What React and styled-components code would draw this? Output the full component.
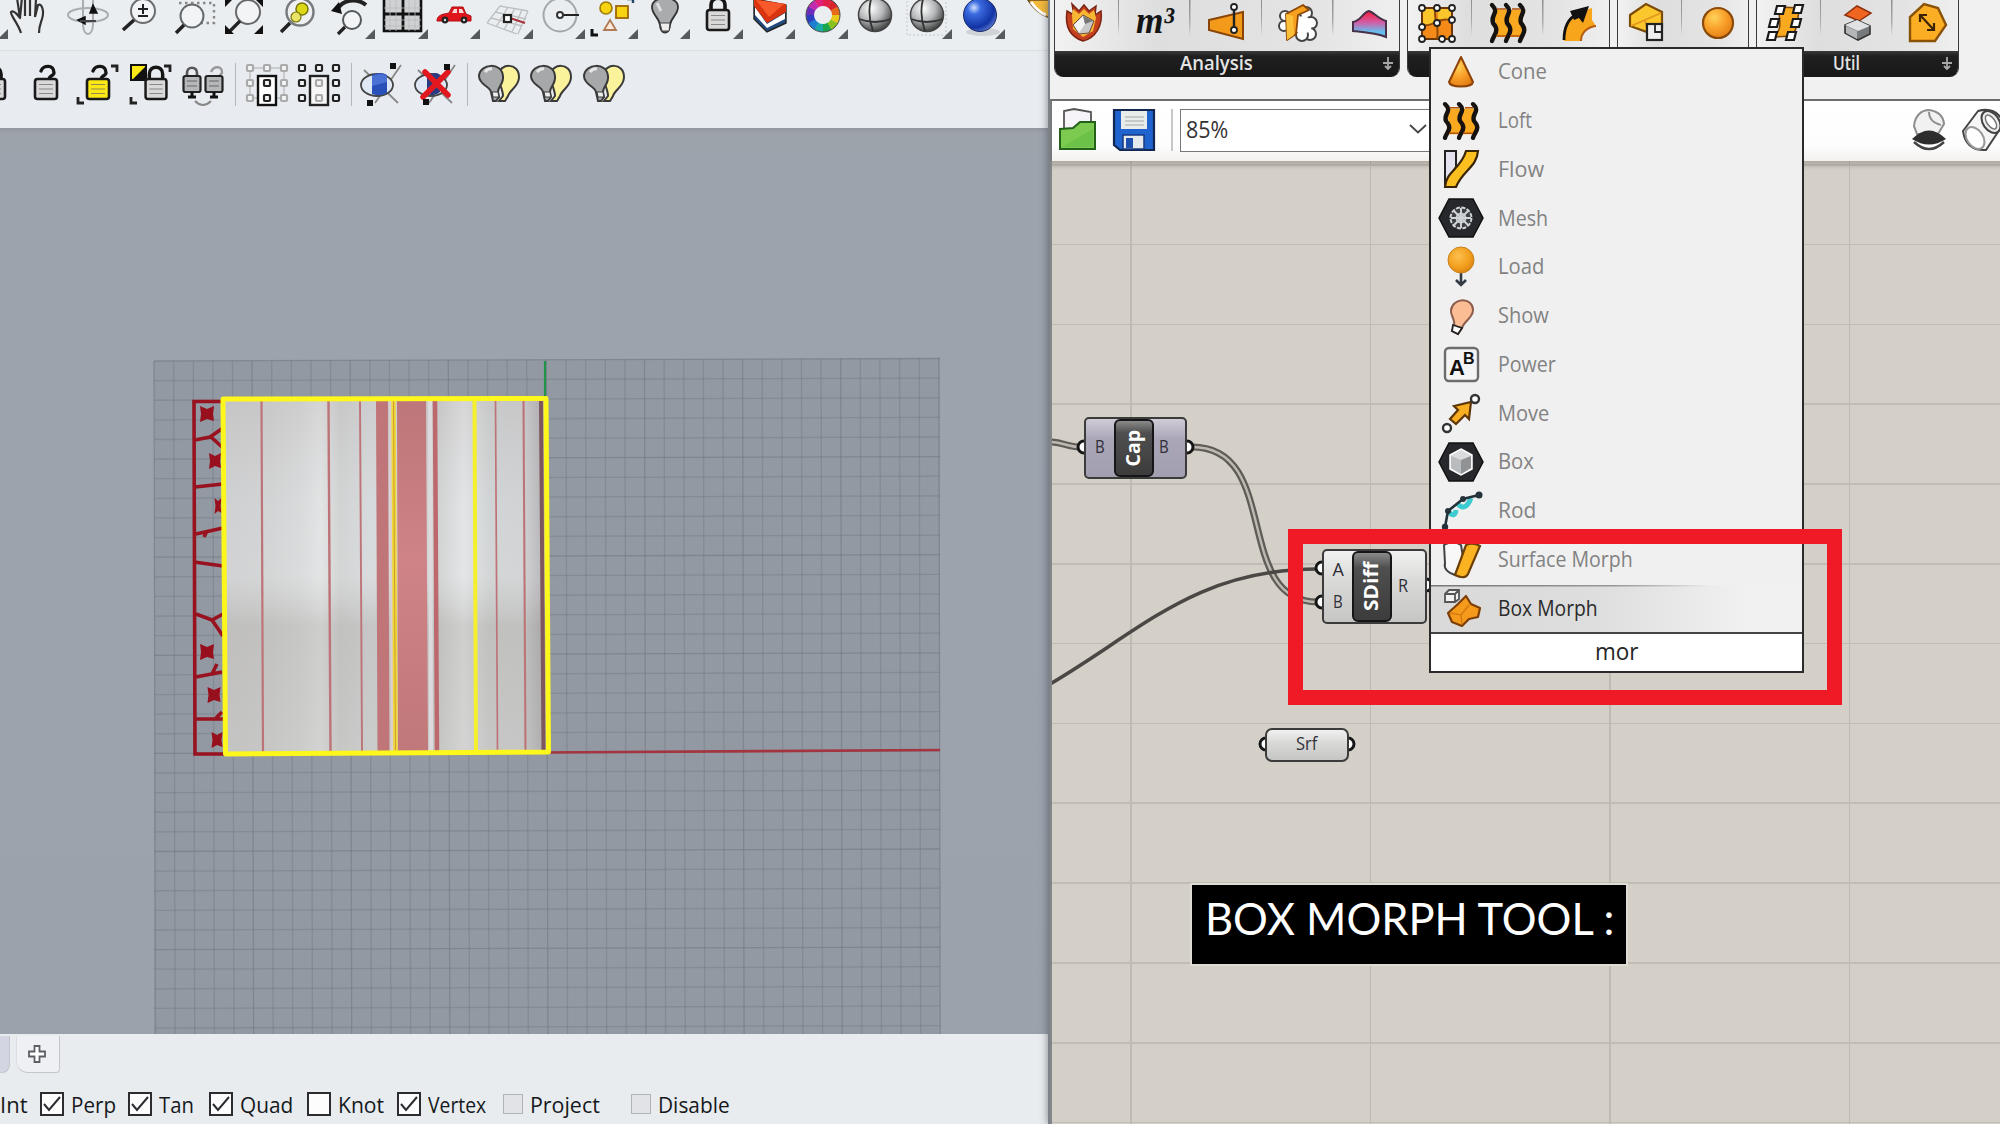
import React, { useLayoutEffect, useRef, useState } from "react";
import styled, { createGlobalStyle, css } from "styled-components";

const Global = createGlobalStyle`
  * { box-sizing: border-box; }
  body { margin: 0; overflow: hidden; background: #e8ebef; }
  svg { display: block; overflow: visible; flex: none; }
`;

const ui = `"Open Sans", "Noto Sans", sans-serif`;

/* ---------- condensed text ---------- */
const FitBox = styled.span`
  display: inline-block;
  width: ${(p) => p.$w}px;
  white-space: nowrap;
`;
const FitInner = styled.span`
  display: inline-block;
  transform-origin: 0 50%;
`;
function Fit({ w, children }) {
  const ref = useRef(null);
  const [k, setK] = useState(1);
  useLayoutEffect(() => {
    setK(w / ref.current.offsetWidth);
  }, [w]);
  return (
    <FitBox $w={w}>
      <FitInner ref={ref} style={{ transform: `scaleX(${k})` }}>{children}</FitInner>
    </FitBox>
  );
}

/* ---------- page shell ---------- */
const Page = styled.div`
  display: flex;
  width: 2000px;
  height: 1124px;
  overflow: hidden;
  position: relative;
  font-family: ${ui};
`;
const Rhino = styled.section`
  width: 1048px;
  flex: none;
  display: flex;
  flex-direction: column;
  background: #e8ecef;
  overflow: hidden;
`;
const Grasshopper = styled.section`
  flex: 1;
  min-width: 0;
  display: flex;
  flex-direction: column;
  border-left: 2px solid #7d8188;
  background: #f0f0f0;
  box-shadow: -1px 0 7px rgba(60, 66, 76, 0.5);
  overflow: hidden;
  position: relative;
`;

/* ---------- Rhino toolbars ---------- */
const ToolRow = styled.div`
  display: flex;
  height: ${(p) => p.$h}px;
  flex: none;
  ${(p) => p.$line && css`border-bottom: 1px solid #dbdfe3;`}
  background: ${(p) => (p.$line ? "#eaeef1" : "#e8ecf0")};
`;
const Cells = styled.div`
  display: flex;
  margin-left: ${(p) => p.$shift}px;
`;
const Cell = styled.div`
  width: 52.48px;
  flex: none;
  display: flex;
  justify-content: center;
`;
const Sep = styled.div`
  width: 11px;
  display: flex;
  justify-content: center;
  padding: 12px 0 22px;
  &::after { content: ""; width: 1px; background: #b3b6bb; }
`;

const Tri = () => <path d="M15 24 L25 14 V24 Z" fill="#56595e" />;

function Padlock({ open, fill = "#d9d9d9" }) {
  return (
    <g>
      {open ? (
        <path d="M-5 -12 C-3 -18 8 -19 8 -10 C8 -7 3 -8 3 -3" fill="none" stroke="#151515" strokeWidth="3.4" strokeLinecap="round" />
      ) : (
        <path d="M-7 -3 V-9 C-7 -18 7 -18 7 -9 V-3" fill="none" stroke="#151515" strokeWidth="3.6" />
      )}
      <rect x="-11" y="-4" width="22" height="20" rx="2.5" fill={fill} stroke="#1a1a1a" strokeWidth="2.6" />
      <path d="M-7 1.500H7M-7 6H7M-7 10.500H7" stroke="#666" strokeWidth="1.2" opacity=".7" />
    </g>
  );
}

const Sphere = () => (
  <g>
    <circle r="16.500" fill="url(#gball)" stroke="#444" strokeWidth="1.5" />
    <path d="M-16 4 Q0 10 16 4M-4 -16 Q-8 0 -2 16" fill="none" stroke="#333" strokeWidth="1.8" />
  </g>
);
const handle = (x, y, s = 6, c = "#222") => (
  <rect key={`${x},${y}`} x={x - s / 2} y={y - s / 2} width={s} height={s} rx="1" fill="#f3f4f5" stroke={c} strokeWidth="2.2" />
);

const ROW1 = [
  { tri: 1, el: null },
  { el: <path transform="translate(-4 0)" d="M-11 18 C-14 8 -22 0 -21 -3 C-18 -6 -12 3 -12 3 L-15 -17 M-12 3 L-10 -18 M-7 1 L-7 -20 M-2 1 V-20 M3 2 L4 -16 M3 2 L6 -10 C11 -12 12 -2 10 4 C8 10 7 12 7 18" fill="#eceff1" stroke="#333" strokeWidth="2.2" strokeLinejoin="round" /> },
  { el: (
    <g fill="none" stroke="#aaadb1" strokeWidth="2">
      <ellipse rx="20" ry="7" /><path d="M-5 -16 V10 C-4 22 4 22 5 10 V-16" />
      <path d="M-10 5 L-3 2 V9 Z M5 -10 L2 -2 H9 Z" fill="#111" stroke="#111" strokeWidth="1.500" /><path d="M-8 6 H8" stroke="#444" /></g>) },
  { el: (
    <g fill="none" stroke="#222"><circle cx="3" cy="-4" r="12" stroke="#6b6e71" strokeWidth="2" fill="#f2f4f5" />
      <path d="M-6 5 L-17 15" strokeWidth="3.6" /><path d="M-2 -6 H8 M3 -11 V-1 M-2 1 H8" strokeWidth="2" /></g>) },
  { el: (
    <g fill="none"><path d="M-14 -12 H21 V8 H8" stroke="#888" strokeWidth="2.4" strokeDasharray="2.5 3.500" />
      <circle cx="-1" cy="1" r="11.500" stroke="#66696c" strokeWidth="2" fill="#f2f4f5" /><path d="M-9 10 L-17 18" stroke="#222" strokeWidth="3.6" /></g>) },
  { el: (
    <g fill="none"><circle cx="3" cy="-3" r="12" stroke="#66696c" strokeWidth="2" fill="#f2f4f5" />
      <path d="M-5 6 L-15 16" stroke="#222" strokeWidth="3.2" />
      <path d="M-20 10 V19 H-11 Z M18 10 V19 H9 Z M-20 -8 V-17 H-11 Z M18 -8 V-17 H9 Z" fill="#111" /></g>) },
  { el: (
    <g><circle cx="2" cy="-3" r="13.500" fill="#eef0f1" stroke="#77797c" strokeWidth="2.4" />
      <circle cx="4" cy="-6" r="6" fill="#dcd814" stroke="#77750c" strokeWidth="1.500" /><circle cx="-2" cy="2" r="5" fill="#e9e465" stroke="#77750c" strokeWidth="1.200" />
      <path d="M-8 8 L-17 17" stroke="#222" strokeWidth="3.600" /></g>) },
  { tri: 1, el: (
    <g fill="none"><path d="M-13 -5 C-8 -15 6 -18 16 -10" stroke="#222" strokeWidth="4" /><path d="M-19 -4 L-11 -13 L-8 -1 Z" fill="#111" />
      <circle cx="2" cy="5" r="9" stroke="#55585b" strokeWidth="2" fill="#f2f4f5" /><path d="M-5 12 L-12 19" stroke="#222" strokeWidth="3.2" /></g>) },
  { tri: 1, el: (
    <g><rect x="-19" y="-18" width="37" height="34" fill="#cfd1d2" stroke="#111" strokeWidth="2.600" /><path d="M0 -18 V16 M-19 -1 H18" stroke="#111" strokeWidth="2.800" />
      <path d="M-13 -18V16M-7 -18V16M6 -18V16M12 -18V16M-19 -7H18M-19 5H18M-19 11H18" stroke="#b9bbbd" strokeWidth=".8" /></g>) },
  { tri: 1, el: (
    <g><path d="M-18 5 C-17 -1 -10 -1 -6 -2 L-3 -8 H8 L11 -1 L16 1 V6 H-18 Z" fill="#e0141b" stroke="#b10d12" strokeWidth="1" />
      <path d="M-3 -2 L-1 -6 H2 V-2Z M4 -2 V-6 H7 L9 -2Z" fill="#f6d9d9" /><circle cx="-10" cy="5" r="3.400" fill="#222" /><circle cx="9" cy="5" r="3.400" fill="#222" /><circle cx="-10" cy="5" r="1.200" fill="#ddd" /><circle cx="9" cy="5" r="1.200" fill="#ddd" /></g>) },
  { tri: 1, el: (
    <g fill="none" stroke="#bdbfc1" strokeWidth="1.300"><path d="M-8 -9 L20 -4 M-13 -3 L18 4 M-17 3 L14 11 M-21 8 L9 19 M-8 -9 L-21 8 M0 -8 L-12 12 M7 -7 L-4 15 M14 -5 L4 17 M20 -4 L10 19" />
      <path d="M2 3 L17 8" stroke="#a8323a" strokeWidth="2" /><rect x="-4" y="0" width="7" height="7" fill="#fff" stroke="#222" strokeWidth="2.200" /></g>) },
  { tri: 1, el: (
    <g fill="none"><circle r="16.500" stroke="#a4a6a9" strokeWidth="2" /><path d="M2 0 H19" stroke="#222" strokeWidth="2" /><circle r="3" stroke="#333" strokeWidth="2" fill="#fff" /></g>) },
  { tri: 1, el: (
    <g><circle cx="-7" cy="-7" r="6" fill="#f7d411" stroke="#9c7a05" strokeWidth="1.600" /><rect x="3" y="-9" width="12" height="12" fill="#f7d411" stroke="#9c6505" strokeWidth="1.800" />
      <path d="M-3 5 L3 15 H-9 Z" fill="#fbe9da" stroke="#ad7a55" strokeWidth="1.800" /><path d="M-21 14 V20 H-15" fill="none" stroke="#111" strokeWidth="3" /><path d="M14 -16 H20 V-12" fill="none" stroke="#246" strokeWidth="2.400" /></g>) },
  { tri: 1, el: (
    <g><path d="M-5 10 C-6 2 -13 0 -13 -8 C-13 -20 13 -20 13 -8 C13 0 6 2 5 10 C5 20 -5 20 -5 10Z" fill="#a9abad" stroke="#333" strokeWidth="1.800" /><path d="M-5 8 H5 L4 16 H-3 Z" fill="#eee" stroke="#444" strokeWidth="1" /><path d="M-8 -12 L-4 -4" stroke="#ddd" strokeWidth="3" /></g>) },
  { tri: 1, el: <g transform="translate(0 -1)"><Padlock /></g> },
  { tri: 1, el: (
    <g><path d="M-16 -16 V4 L-3 17 L16 8 V-10 Z" fill="#234a7c" stroke="#222" strokeWidth="1.400" /><path d="M-15 -8 L-3 9 L15 -2 V4 L-3 13 L-15 0Z" fill="#fff" /><path d="M-16 -16 L16 -11 V-3 L-3 8 L-16 -9 Z" fill="#d9330f" /><path d="M-14 -15 L14 -11 L-1 2 Z" fill="#f8592b" /></g>) },
  { tri: 1, el: (
    <g fill="none" strokeWidth="8">
      {["#d8262e", "#e76a1c", "#e8c818", "#89c21e", "#19a64b", "#19a9a9", "#1d7fd0", "#2b3fc0", "#6d2bbb", "#c02bb0", "#e0207a", "#e02048"].map((c, i) => {
        const a = ((i * 30 - 60) * Math.PI) / 180, b = ((i * 30 - 29) * Math.PI) / 180;
        return <path key={c} stroke={c} d={`M${13 * Math.cos(a)} ${13 * Math.sin(a)} A13 13 0 0 1 ${13 * Math.cos(b)} ${13 * Math.sin(b)}`} />;
      })}
      <circle r="17" stroke="#444" strokeWidth="1" /></g>) },
  { el: <Sphere /> },
  { tri: 1, el: <g><rect x="-20" y="-18" width="39" height="38" fill="none" stroke="#c3c5c8" strokeDasharray="2 2" /><Sphere /></g> },
  { tri: 1, el: <g><ellipse cx="3" cy="17" rx="17" ry="4" fill="#cfd3d8" /><circle r="16.500" fill="url(#gblue)" stroke="#1b2a66" strokeWidth="1" /></g> },
];

const GreyPad = ({ x, open }) => (
  <g transform={`translate(${x} 0)`}>
    {open ? <path d="M-3 -11 C0 -18 9 -17 8 -10 L4 -6 V-3" fill="none" stroke="#999" strokeWidth="2.400" /> : <path d="M-5 -5 V-10 C-5 -17 5 -17 5 -10 V-5" fill="none" stroke="#555" strokeWidth="2.600" />}
    <rect x="-8.500" y="-7" width="17" height="16" rx="2" fill="#b5b7b9" stroke="#222" strokeWidth="2.200" /><path d="M-5 -2H5M-5 3H5" stroke="#666" />
    <path d="M0 9 V14 M-4 14 H4" stroke="#111" strokeWidth="3" />
  </g>
);
const ring = [[-17, -15], [0, -15], [17, -15], [-17, 0], [17, 0], [-17, 15], [17, 15]];
const Pins = () => (
  <g><path d="M-17 -13 L17 20 M20 -18 L-6 20" stroke="#888" strokeWidth="1.800" />
    <ellipse cx="-4" cy="2" rx="16" ry="11" fill="#dfe8f4" stroke="#444" strokeWidth="1.800" /></g>
);
const TwoBulbs = () => (
  <g strokeWidth="2" stroke="#3a3a3a">
    <path d="M4 13 C4 5 -2 -2 -1 -8 C1 -20 20 -21 20 -6 C20 4 11 6 9 13 L6 18 H0 Z" fill="#fbf39c" />
    <path d="M-8 9 C-9 3 -20 2 -20 -7 C-19 -20 3 -21 4 -7 C5 1 -1 3 -1 9 L0 14 L-3 18 H-6 Z" fill="#a6a8aa" />
    <path d="M-7 9 H-1 L0 14 H-6 Z" fill="#eee" strokeWidth="1.200" /><path d="M-14 -11 Q-11 -15 -7 -14" stroke="#e7e7e7" strokeWidth="3" fill="none" />
  </g>
);
const ROW2 = [
  <Padlock />, <Padlock open />,
  <g><Padlock open fill="#fbe816" /><path d="M13 -17 H19 V-11 M-20 14 V20 H-14" fill="none" stroke="#222" strokeWidth="2.800" /></g>,
  <g><rect x="-20" y="-18" width="15" height="15" fill="#fbe816" stroke="#111" strokeWidth="2" /><path d="M-4 -18 V-2 H-20 Z" fill="#111" /><g transform="translate(5 0) scale(.95 1)"><Padlock /></g><path d="M13 -17 H19 V-11 M-20 14 V20 H-14" fill="none" stroke="#222" strokeWidth="2.800" /></g>,
  <g><GreyPad x={-11} /><GreyPad x={11} open /><path d="M-8 18 Q0 26 8 18" fill="none" stroke="#888" strokeWidth="2" /></g>,
  "sep",
  <g><path d="M-17 -15 H17 V15 H-17 Z" fill="none" stroke="#aaa" />{ring.map(([x, y]) => handle(x, y, 6, "#aaa"))}<rect x="-9" y="-7" width="18" height="29" fill="#fff" stroke="#111" strokeWidth="2.400" />{handle(0, 0)}{handle(0, 15)}</g>,
  <g>{ring.map(([x, y]) => handle(x, y))}<rect x="-9" y="-7" width="18" height="29" fill="#f6f6f6" stroke="#222" strokeWidth="2.400" />{handle(0, 0, 6, "#aaa")}{handle(0, 15, 6, "#aaa")}</g>,
  "sep",
  <g transform="translate(-2 0)"><Pins /><path d="M-9 -8 Q0 -12 6 -8 V10 Q0 14 -9 11Z" fill="#2850b8" /><path d="M-9 -7 Q0 -11 6 -7 V-1 L-9 3Z" fill="#4a72d4" /><rect x="9" y="-20" width="6" height="6" fill="#111" /><rect x="-14" y="17" width="6" height="6" fill="#111" /></g>,
  <g><Pins /><path d="M-8 -8 Q2 -12 5 -8 V9 Q0 14 -8 11Z" fill="#2b3a80" /><path d="M-10 -11 L13 12 M13 -11 L-12 14" stroke="#e3171e" strokeWidth="5.500" strokeLinecap="round" /><rect x="9" y="-19" width="6" height="6" fill="#111" /><rect x="-12" y="16" width="6" height="6" fill="#111" /></g>,
  "sep",
  <TwoBulbs />, <TwoBulbs />, <TwoBulbs />,
];

/* ---------- Rhino viewport ---------- */
const Viewport = styled.div`
  height: 906px;
  flex: none;
  overflow: hidden;
  background: linear-gradient(#92979d, #9ca3ab 5px, #9ca3ad 60%, #9ba2ab);
`;

function Scene() {
  const minor = [];
  for (let i = 0; i <= 40; i++) {
    const x = 154 + i * 19.62;
    minor.push(<path key={`v${i}`} d={`M${x} ${361 - i * 0.07} L${x + 1.5} 1040`} opacity={i % 5 === 0 ? 0.62 : 0.48} />);
  }
  for (let i = 0; i <= 34; i++) {
    const y = 361 + i * 19.62;
    minor.push(<path key={`h${i}`} d={`M154 ${y} L940 ${y - 2.5}`} opacity={i % 5 === 0 ? 0.62 : 0.48} />);
  }
  const blob = (x, y, w = 14) => (
    <path key={`${x},${y}`} transform={`translate(${x} ${y})`} d={`M${-w / 2} -8 L0 -5 L${w / 2} -8 L${w / 2 - 1} 0 L${w / 2} 7 L0 5 L${-w / 2} 8 L${-w / 2 + 1} 0 Z`} fill="#980f1d" />
  );
  return (
    <svg width="1048" height="906" viewBox="0 128 1048 906">
      <path d="M154 361 L940 358 V1034 H154Z" fill="#9299a2" />
      <g stroke="#747b85" strokeWidth="1.300" fill="none">{minor}</g>
      <path d="M545 361 V400" stroke="#239447" strokeWidth="2.200" />
      <path d="M545 752.500 L940 750" stroke="#a33540" strokeWidth="2.600" />
      <g fill="none" stroke="#98121f" strokeWidth="3.600">
        <path d="M224 401.500 H194 L195 754 H226" />
        <path d="M195 440 L210 437 L223 428 M211 437 L222 447 M195 487 L223 484 M196 534 L223 528 M207 531 L204 537 M194 562 L223 566 M196 614 L212 620 L223 614 M212 620 L223 636 M196 677 L222 672 M212 674 L217 664 M196 719 H224 M216 718 L222 712" />
      </g>
      {[blob(207, 414), blob(215, 461, 12), blob(218, 506, 7), blob(207, 652), blob(214, 695, 13), blob(217, 740, 11)]}
      <path d="M223 399 L546 399 L548 752 L225 754 Z" fill="url(#cyl)" />
      <path d="M223 399 L546 399 L548 752 L225 754 Z" fill="url(#cylv)" />
      <path d="M376 401 H388 L389.500 752 H377.500Z" fill="#c07679" />
      <path d="M397 401 H426 L428 752 H398Z" fill="url(#redband)" />
      <path d="M391 401 L392 752" stroke="#ddd0d0" strokeWidth="2" />
      <path d="M430 401 L431 752" stroke="#dcdadc" strokeWidth="4" />
      <g fill="none" stroke="#bd7478">
        <path d="M261.500 401 L263 752" strokeWidth="2.200" /><path d="M328.500 401 L330.500 752" strokeWidth="2.400" />
        <path d="M360 401 L362 752" strokeWidth="1.900" /><path d="M435 401 L437 752" strokeWidth="4.500" stroke="#bc686c" />
        <path d="M495.500 401 L497.500 752" strokeWidth="1.700" /><path d="M523.500 401 L525.500 752" strokeWidth="2.100" />
        <path d="M541 401 L543.500 752" strokeWidth="4" stroke="#7d565e" />
      </g>
      <path d="M393.500 400 L395.500 752" stroke="#f0d738" strokeWidth="4.500" /><path d="M393.500 400 L395.500 752" stroke="#cf9d33" strokeWidth="1" />
      <path d="M474.500 400 L476 752" stroke="#f4f02c" strokeWidth="4" />
      <path d="M223 399 L546 398.500 L548.500 752 L225.500 754 Z" fill="none" stroke="#fdf71c" strokeWidth="5" strokeLinejoin="round" />
    </svg>
  );
}

/* ---------- Rhino bottom ---------- */
const Tabs = styled.div`
  display: flex;
  height: 40px;
  padding-top: 2px;
  gap: 6px;
`;
const Tab = styled.div`
  width: ${(p) => p.$w}px;
  height: 37px;
  display: flex;
  align-items: center;
  justify-content: center;
  padding-right: 3px;
  border: 1.5px solid #c3c6cc;
  border-top: 0;
  border-left-color: ${(p) => (p.$dim ? "transparent" : "#dcdee2")};
  border-radius: 0 0 ${(p) => (p.$dim ? "8px 0" : "4px 12px")};
  background: ${(p) => (p.$dim ? "#d4d5e2" : "#eef0f3")};
`;
const Snaps = styled.div`
  display: flex;
  align-items: center;
  height: 50px;
  padding-top: 10px;
  color: #16181c;
  font-size: 22px;
  line-height: 40px;
`;
const Snap = styled.label`
  display: flex;
  align-items: center;
  gap: 7px;
  margin-left: ${(p) => p.$gap}px;
`;
const Box = styled.span`
  width: ${(p) => (p.$off ? 20 : 24)}px;
  height: ${(p) => (p.$off ? 20 : 24)}px;
  border: ${(p) => (p.$off ? "1.5px solid #b0b2b6" : "2px solid #2a2c30")};
  background: ${(p) => (p.$off ? "#e1e3e6" : "#fdfdfd")};
  display: flex;
  align-items: center;
  justify-content: center;
`;
const SNAPS = [
  ["Perp", 45, 13, "on"], ["Tan", 35, 12, "on"], ["Quad", 53, 15, "on"], ["Knot", 46, 14, ""], ["Vertex", 58, 13, "on"],
  ["Project", 70, 17, "off"], ["Disable", 72, 31, "off"],
];

/* ---------- Grasshopper ribbon ---------- */
const Ribbon = styled.div`
  height: 99px;
  flex: none;
  display: flex;
  gap: 7px;
  padding-left: 4px;
  background: #f1f1f1;
`;
const Group = styled.div`
  width: ${(p) => p.$w}px;
  height: 77px;
  display: flex;
  flex-direction: column;
  border-radius: 0 0 9px 9px;
  overflow: hidden;
  border: 1.5px solid #3b3b3b;
  border-top: 0;
  border-bottom: 0;
  background: linear-gradient(90deg, #f2f2f2, #dedede 30%, #e4e4e4 75%, #efefef);
`;
const GroupIcons = styled.div`
  display: flex;
  height: 51px;
  flex: none;
  margin-left: -7px;
`;
const GroupCell = styled.div`
  width: 71.4px;
  flex: none;
  display: flex;
  justify-content: center;
  background: linear-gradient(#8e8e8e, #aaa 60%, transparent) right 0 top 0 / 1.500px 36px no-repeat;
  &:last-child { background: none; }
`;
const GroupBar = styled.div`
  height: 26px;
  flex: none;
  display: grid;
  grid-template-columns: 1fr 21px;
  align-items: center;
  justify-items: center;
  background: linear-gradient(#3a3a3a, #1f1f1f 20%, #181818);
  color: #e4e4e4;
  font-size: 20px;
  line-height: 24px;
  font-weight: 600;
  padding: 0 1px 2px 0;
`;

const O = "#f7a61c";
const loft = (
  <g><path d="M-14 -13 H16 Q10 -5 16 2 Q18 8 14 14 H-16 Q-8 4 -14 -4 Q-17 -9 -14 -13" fill="#f9a91f" />
    {[-14, 0, 14].map((x) => <path key={x} d={`M${x - 2} -18 C${x + 6} -10 ${x - 4} -8 ${x - 1} 0 C${x + 6} 8 ${x} 11 ${x - 2} 18`} fill="none" stroke="#151210" strokeWidth="4.400" strokeLinecap="round" />)}
    <path d="M-11 -14 H-2 M4 -14 H12 M-12 13 H-2 M2 13 H12" stroke="#b35009" strokeWidth="1.600" /></g>
);
const dots = (pts, r = 3) => pts.map(([x, y]) => <circle key={`${x}_${y}`} cx={x} cy={y} r={r} fill="#fff" stroke="#222" strokeWidth="1.800" />);
const sq = (pts) => pts.map(([x, y]) => <path key={`${x}_${y}`} d={`M${x - 3} ${y - 4} H${x + 5} L${x + 3} ${y + 4} H${x - 5} Z`} fill="#fff" stroke="#1a1a1a" strokeWidth="2.200" />);

const RIBBON = [
  { w: 346, label: "Analysis", lw: 73, icons: [
    <g><path d="M-17 -12 C-20 8 -10 15 -1 18 C12 15 19 2 17 -12 L11 -8 L12 -17 L5 -12 L0 -18 L-5 -12 L-12 -19 L-10 -8 Z" fill="#c4401e" stroke="#7a2413" strokeWidth="1.500" /><path d="M-12 -8 L-11 -14 L-5 -9 L0 -14 L5 -9 L10 -13 L12 -5 L9 8 L-1 14 L-11 6Z" fill="#f7b733" /><path d="M-11 2 L-1 -8 L10 -2 L5 10 L-5 11Z" fill="#c9c9c9" stroke="#6b4a3a" /><path d="M-10 2 L-1 -7 L1 1 L-5 10Z" fill="#f3f3f3" /><path d="M-1 -7 L9 -2 L1 1Z" fill="#777" /></g>,
    <text x="-19" y="10" fontFamily="'Liberation Serif', serif" fontStyle="italic" fontWeight="bold" fontSize="37" fill="#151515" textLength="38" lengthAdjust="spacingAndGlyphs">m³</text>,
    <g><path d="M-17 -3 L17 -11 V16 L-17 7Z" fill="#f39a1b" stroke="#8a4405" strokeWidth="2" /><path d="M8 -15 V7" stroke="#222" strokeWidth="2.400" />{dots([[8, -16], [8, 7]])}</g>,
    <g><g fill="#fff" stroke="#444" strokeWidth="2"><circle cx="8" cy="-10" r="6" /><circle cx="13" cy="0" r="6" /><circle cx="12" cy="11" r="6" /><circle cx="4" cy="12" r="6" /><circle cx="-13" cy="-7" r="5" /><circle cx="-14" cy="3" r="5" /></g><circle cx="5" cy="2" r="9" fill="#fff" /><path d="M-12 -9 L5 -18 L11 -13 L0 -8 L-2 11 L-11 17 Z" fill="#f6a01e" stroke="#8a4708" strokeWidth="1.800" strokeLinejoin="round" /><path d="M-12 -9 L-5 -7 L-4 12 L-11 17Z" fill="#fbc03a" /></g>,
    <g><path d="M-16 -1 C-8 -2 -6 -11 0 -12 C6 -10 9 -4 17 -2 V14 C8 10 -6 9 -16 8Z" fill="url(#heat)" stroke="#473048" strokeWidth="2" /></g>,
  ] },
  { w: 203, label: "", lw: 1, icons: [
    <g><rect x="-15" y="-15" width="30" height="31" fill="#f58a18" stroke="#6b3606" strokeWidth="2" /><path d="M-14 -14 H-2 V1 H-14Z M1 -14 H14 V-4 H1Z" fill="#fbc62b" /><path d="M-1 -15 C-5 -5 3 0 0 16 M-15 2 C-8 6 5 -8 15 -2" fill="none" stroke="#8f4a08" strokeWidth="2" />{dots([[-15, -15], [0, -15], [15, -15], [15, -3], [0, 0], [-15, 4], [-15, 16], [5, 16], [15, 16]])}</g>,
    loft,
    <g><path d="M-15 18 C-15 -2 -6 -9 3 -12 L13 -15 V-3 L17 3 C9 4 2 9 2 18Z" fill={O} /><path d="M17 3 C9 4 2 9 2 18" stroke="#b55b12" strokeWidth="2" fill="none" /><path d="M-15 17 C-15 2 -10 -5 -2 -9" fill="none" stroke="#111" strokeWidth="2.800" /><path d="M-9 -12 L10 -17 L4 0 L0 -5 L-5 -3 Z" fill="#111" /></g>,
  ] },
  { w: 132, label: "", lw: 1, icons: [
    <g><path d="M-17 -8 L-1 -19 L15 -11 V4 L0 9 L-17 3Z" fill="#fcc62d" stroke="#7b4d09" strokeWidth="2.200" /><path d="M-16 3 L-2 -3 L14 -10 M-2 -3 L0 9" stroke="#e0951c" strokeWidth="1.500" fill="none" /><rect x="0" y="1" width="15" height="16" fill="#eee" stroke="#222" strokeWidth="2.200" /><path d="M8 1 V9 H15" fill="none" stroke="#222" strokeWidth="1.800" /></g>,
    <circle r="15" cx="0" cy="0" fill="url(#orb)" stroke="#8c4a08" strokeWidth="2.200" />,
  ] },
  { w: 203, label: "Util", lw: 27, icons: [
    <g><path d="M-7 -16 L14 -15 C10 -4 14 2 6 13 L-12 14 C-2 4 -8 -4 -7 -16Z" fill="#f8a91f" stroke="#7d4506" strokeWidth="1.500" />{sq([[-6, -13], [12, -14], [-12, 0], [10, 0], [-14, 13], [5, 13]])}</g>,
    <g><path d="M0 -17 L14 -10 L2 -2 L-12 -8Z" fill="#f0651f" stroke="#8f2f0c" strokeWidth="1.500" /><path d="M-12 2 L0 -3 L13 3 V11 L1 17 L-12 10Z" fill="#777a7c" stroke="#333" strokeWidth="1.600" /><path d="M-12 2 L0 -3 L13 3 L1 8Z" fill="#e0e2e3" /><path d="M-11 3 L0 8 V16 L-11 10Z" fill="#b4b6b8" /></g>,
    <g><path d="M-18 18 V-6 L-4 -19 L10 -15 L18 2 L7 18Z" fill="#fbae23" stroke="#8a5206" strokeWidth="2.400" /><path d="M-8 -8 L6 7 M-8 -1 V-8 H-1 M6 0 V7 H-1" fill="none" stroke="#3c2404" strokeWidth="2.200" /></g>,
  ] },
];

/* ---------- Grasshopper canvas toolbar ---------- */
const CanvasBar = styled.div`
  height: 62px;
  flex: none;
  display: flex;
  align-items: flex-start;
  padding: 8px 0 0 7px;
  border-top: 2px solid #6d6d6d;
  border-left: 2px solid #77797b;
  background: linear-gradient(#fff, #fdfdfd 75%, #f2f1ef);
`;
const BarSep = styled.div`
  width: 1.5px;
  flex: none;
  height: 42px;
  background: #c8c8c8;
  margin: 0 7px 0 15px;
`;
const Zoom = styled.div`
  width: 256px;
  flex: none;
  height: 43px;
  display: flex;
  align-items: center;
  justify-content: space-between;
  padding: 0 8px 4px 5px;
  border: 1.5px solid #777;
  background: #fff;
  color: #333;
  font-size: 23px;
  line-height: 38px;
`;
const BarRight = styled.div`
  display: flex;
  flex: none;
  gap: 14px;
  margin-left: 474px;
`;

/* ---------- Grasshopper canvas ---------- */
const Canvas = styled.div`
  flex: 1;
  position: relative;
  overflow: hidden;
  border-left: 2px solid #82868a;
  background:
    linear-gradient(rgba(120, 112, 100, 0.4), transparent 9px) 0 0 / 100% 9px no-repeat,
    repeating-linear-gradient(90deg, transparent 0 78px, #bfbbb3 78px 79.500px, transparent 79.500px 239.600px),
    repeating-linear-gradient(transparent 0 3px, #c1bdb5 3px 4.700px, transparent 4.700px 79.800px),
    #d4d0c8;
`;
const Wires = styled.svg`
  position: absolute;
  left: 0;
  top: 0;
`;
const Node = styled.div`
  position: absolute;
  left: ${(p) => p.$x}px;
  top: ${(p) => p.$y}px;
  width: ${(p) => p.$w}px;
  height: ${(p) => p.$h}px;
  display: flex;
  align-items: stretch;
  border: 2px solid #3b3b3b;
  border-radius: ${(p) => p.$r || 5}px;
  background: ${(p) => (p.$hue === "violet" ? "linear-gradient(#cfccd6, #aaa6b7 35%, #a29fb0)" : "linear-gradient(#f1f1f1, #d8d8d6 45%, #c6c7c4)")};
  color: #2f2f38;
  font-size: 18px;
  line-height: 24px;
`;
const Ports = styled.div`
  flex: ${(p) => (p.$w ? "none" : 1)};
  width: ${(p) => (p.$w ? `${p.$w}px` : "auto")};
  display: flex;
  flex-direction: column;
  justify-content: center;
  gap: ${(p) => p.$gap || 0}px;
  align-items: center;
  padding: 0 ${(p) => p.$pr || 0}px 4px 0;
`;
const Core = styled.div`
  width: 40px;
  flex: none;
  display: flex;
  align-items: center;
  justify-content: center;
  border: 2px solid #161616;
  border-radius: 6px;
  background: linear-gradient(#8a8a8a, #4f4f4f 22%, #3c3c3c);
  color: #fff;
  font-weight: 700;
  font-size: 20px;
  line-height: 24px;
`;
const Turn = styled.div`
  transform: rotate(-90deg);
  flex: none;
  padding-bottom: 3px;
`;
const Caption = styled.div`
  position: absolute;
  left: 140px;
  top: 724px;
  width: 434px;
  height: 79px;
  padding-left: 13px;
  background: #000;
  color: #fff;
  box-shadow: 0 0 0 2px #dfdcd5;
  font-family: Lato, ${ui};
  font-size: 44px;
  line-height: 66px;
`;
const RedFrame = styled.div`
  position: absolute;
  left: 1288px;
  top: 529px;
  width: 554px;
  height: 176px;
  border: 15px solid #ef1a25;
`;

/* ---------- search popup ---------- */
const Menu = styled.div`
  position: absolute;
  left: 1429px;
  top: 47px;
  width: 375px;
  height: 626px;
  display: flex;
  flex-direction: column;
  border: 2px solid #2b2b2b;
  background: #f0f0f0;
`;
const Item = styled.div`
  height: 48.75px;
  flex: none;
  display: flex;
  align-items: center;
  gap: 14px;
  padding: 0 0 3px 7px;
  color: ${(p) => (p.$active ? "#2a2a2a" : "#828282")};
  font-size: 22px;
  line-height: 44px;
  ${(p) => p.$active && css`
    padding-bottom: 1px;
    border-bottom: 2px solid #444;
    background:
      linear-gradient(90deg, #777, #999 50%, transparent 75%) 0 0 / 100% 1.500px no-repeat,
      linear-gradient(97deg, #d9d9d9, #dedede 45%, #f1f1f1 85%);
  `}
`;
const Label = styled.span`
  padding-bottom: 3px;
`;
const Query = styled.div`
  flex: 1;
  display: flex;
  justify-content: center;
  align-items: center;
  background: #fff;
  color: #262626;
  font-size: 23px;
  line-height: 30px;
  padding: 0 0 3px;
`;
const hex = <path d="M-22 0 L-12 -19 H12 L22 0 L12 19 H-12Z" fill="#26282b" stroke="#111" strokeWidth="1.500" />;
const ITEMS = [
  ["Cone", 49, <path d="M0 -15 L12 10 C11 16 -11 16 -12 10Z" fill="url(#orb)" stroke="#8c4208" strokeWidth="2" strokeLinejoin="round" />],
  ["Loft", 34, <g transform="scale(1 .94)">{loft}</g>],
  ["Flow", 46, <g><path d="M-16 -18 H-5 V-2 L-16 14Z" fill="#e4e2ee" stroke="#222" strokeWidth="2" /><path d="M5 -18 H17 C16 -2 1 2 -5 18 H-16 C-15 2 0 0 5 -18Z" fill="#fbc01f" stroke="#3a2506" strokeWidth="2.200" /></g>],
  ["Mesh", 50, <g>{hex}<circle r="11" fill="#3d4043" /><g fill="none" stroke="#d3d6d9" strokeWidth="1.900"><circle r="10.500" strokeDasharray="4 1.500" /><circle r="4.500" /><path d="M-10 0H10M0 -10V10M-7 -7L7 7M7 -7L-7 7" /></g></g>],
  ["Load", 46, <g><path d="M0 4 V18 M-5 13 L0 18 L5 13" stroke="#333c44" strokeWidth="2.600" fill="none" /><circle cy="-7" r="13" fill="url(#orb2)" stroke="#c68220" strokeWidth="1" /></g>],
  ["Show", 51, <g><path d="M-7 11 C-5 3 -11 0 -10 -6 C-8 -19 12 -19 12 -6 C12 2 3 5 1 12 L-3 18 L-9 15Z" fill="#fbbd94" stroke="#8c5c4c" strokeWidth="2" /><path d="M-8 9 L1 12 L-3 18 L-9 15Z" fill="#fff" stroke="#222" strokeWidth="1.800" /></g>],
  ["Power", 58, <g><rect x="-16" y="-16" width="33" height="33" rx="4" fill="#f4f4f4" stroke="#6c6c6c" strokeWidth="2.400" /><text x="-12" y="11" fontFamily="'Liberation Sans', sans-serif" fontWeight="bold" fontSize="22" fill="#111">A</text><text x="2" y="0" fontFamily="'Liberation Sans', sans-serif" fontWeight="bold" fontSize="16" fill="#111">B</text></g>],
  ["Move", 51, <g><path d="M-11 6 L-3 -3 L-7 -7 L10 -11 L8 6 L4 2 L-5 11Z" fill="#f9ae22" stroke="#5e3507" strokeWidth="2.200" /><g fill="#fff" stroke="#333" strokeWidth="2.400"><circle cx="14" cy="-14" r="4" /><circle cx="-14" cy="15" r="4" /></g></g>],
  ["Box", 36, <g>{hex}<path d="M0 -13 L11 -7 V7 L0 13 L-11 7 V-7Z" fill="#d9dbdc" stroke="#fff" strokeWidth="1.500" /><path d="M0 -2 L10 -6 V6 L0 12Z" fill="#8f9396" /><path d="M-10 -6 L0 -2 V12 L-10 6Z" fill="#b9bcbe" /></g>],
  ["Rod", 38, <g><path d="M-13 0 Q-6 8 -5 -1 M-4 -8 Q4 2 10 -13" fill="none" stroke="#3ccbd0" strokeWidth="5" /><path d="M-16 16 L-13 0 L2 -12 L18 -16" fill="none" stroke="#24333a" strokeWidth="2.600" /><g fill="#24333a"><circle cx="-16" cy="16" r="3.200" /><circle cx="-13" cy="0" r="3" /><circle cx="2" cy="-12" r="3" /><circle cx="18" cy="-16" r="3.500" /></g></g>],
  ["Surface Morph", 135, <g><path d="M-17 -14 Q-8 -19 0 -14 L2 -2 L-6 16 Q-18 12 -16 4Z" fill="#f8f8f8" stroke="#444" strokeWidth="2" /><path d="M5 -14 Q12 -17 19 -13 L7 15 Q4 21 -6 16Z" fill="#fbb321" stroke="#6b3f06" strokeWidth="2.200" /></g>],
  ["Box Morph", 100, <g><path d="M-16 -14 L-12 -18 H-2 V-9 L-6 -6 H-16Z M-16 -14 H-6 V-6 M-6 -14 L-2 -18" fill="#f2f2f2" stroke="#555" strokeWidth="1.800" /><path d="M-3 -4 L5 -12 L10 -4 L19 0 L17 9 L8 11 L1 18 L-9 14 L-13 5Z" fill="#f69a1b" stroke="#7d3f06" strokeWidth="2.200" strokeLinejoin="round" /><path d="M-11 5 L0 7 L8 -3 M0 7 L1 16" fill="none" stroke="#d47a12" strokeWidth="1.600" /></g>, true],
];

const Defs = () => (
  <svg width="0" height="0" style={{ position: "absolute" }}>
    <defs>
      <radialGradient id="gball" cx=".38" cy=".3" r=".75"><stop offset="0" stopColor="#fff" /><stop offset=".5" stopColor="#b4b6b8" /><stop offset="1" stopColor="#333" /></radialGradient>
      <radialGradient id="gblue" cx=".32" cy=".28" r=".8"><stop offset="0" stopColor="#cfe0ff" /><stop offset=".25" stopColor="#3b6be0" /><stop offset=".75" stopColor="#1233a4" /><stop offset="1" stopColor="#5e7fd0" /></radialGradient>
      <radialGradient id="orb" cx=".38" cy=".32" r=".75"><stop offset="0" stopColor="#ffd35a" /><stop offset=".5" stopColor="#f9a02a" /><stop offset="1" stopColor="#e07c12" /></radialGradient>
      <radialGradient id="orb2" cx=".4" cy=".35" r=".7"><stop offset="0" stopColor="#fcc050" /><stop offset=".6" stopColor="#f3a01f" /><stop offset="1" stopColor="#d98312" /></radialGradient>
      <linearGradient id="heat" x1="0" y1="0" x2="0" y2="1"><stop offset=".1" stopColor="#ef2a52" /><stop offset=".45" stopColor="#d060a8" /><stop offset=".8" stopColor="#65bfee" /></linearGradient>
      <linearGradient id="cyl" x1="0" x2="1" y1="0" y2="0"><stop offset="0" stopColor="#c8c7c8" /><stop offset=".14" stopColor="#cdcccc" /><stop offset=".24" stopColor="#d6d6d6" /><stop offset=".3" stopColor="#e3e3e3" /><stop offset=".36" stopColor="#cccccb" /><stop offset=".46" stopColor="#d4d6d8" /><stop offset=".66" stopColor="#c9c9c8" /><stop offset=".74" stopColor="#e4e4e5" /><stop offset=".82" stopColor="#cbcdcc" /><stop offset=".92" stopColor="#cbcbcc" /><stop offset="1" stopColor="#99949a" /></linearGradient>
      <linearGradient id="cylv" x1="0" x2="0" y1="0" y2="1"><stop offset="0" stopColor="#c2c0c2" stopOpacity=".4" /><stop offset=".3" stopColor="#dfe5e7" stopOpacity=".3" /><stop offset=".5" stopColor="#e3e7e9" stopOpacity=".35" /><stop offset=".64" stopColor="#b4b4b0" stopOpacity=".45" /><stop offset="1" stopColor="#c0c0be" stopOpacity=".45" /></linearGradient>
      <linearGradient id="redband" x1="0" x2="0" y1="0" y2="1"><stop offset="0" stopColor="#bd7679" /><stop offset=".45" stopColor="#cf8386" /><stop offset="1" stopColor="#c1787a" /></linearGradient>
    </defs>
  </svg>
);

const port = (x, y, side) => (
  <path key={`${x}-${y}`} d={side === "l" ? `M${x} ${y - 6} A6 6 0 0 0 ${x} ${y + 6}` : `M${x} ${y - 6} A6 6 0 0 1 ${x} ${y + 6}`} fill="#fff" stroke="#161616" strokeWidth="3" />
);

export default function App() {
  return (
    <Page>
      <Global />
      <Defs />
      <Rhino>
        <ToolRow $h={51} $line>
          <Cells $shift={-43.2}>
            {ROW1.map((t, i) => (
              <Cell key={i}><svg width="52" height="50" viewBox="-26 -15 52 50">{t.el}{t.tri && <Tri />}</svg></Cell>
            ))}
            <Cell><svg width="52" height="50" viewBox="-26 -15 52 50"><path d="M-4 -15 Q4 -2 18 3 V-15Z" fill="#f3b93b" stroke="#6d4a1a" strokeWidth="1.500" /><path d="M-1 -13 Q6 -3 14 0" fill="none" stroke="#fff" strokeWidth="3" /></svg></Cell>
          </Cells>
        </ToolRow>
        <ToolRow $h={77}>
          <Cells $shift={-32.7}>
            {ROW2.map((t, i) => t === "sep" ? <Sep key={i} /> : (
              <Cell key={i}><svg width="52" height="70" viewBox="-26 -32 52 70">{t}</svg></Cell>
            ))}
          </Cells>
        </ToolRow>
        <Viewport><Scene /></Viewport>
        <Tabs>
          <Tab $w={10} $dim />
          <Tab $w={44}>
            <svg width="18" height="18" viewBox="-9 -9 18 18"><path d="M-2.500 -8 H2.500 V-2.500 H8 V2.500 H2.500 V8 H-2.500 V2.500 H-8 V-2.500 H-2.500Z" fill="#fff" stroke="#5b5f65" strokeWidth="1.800" /></svg>
          </Tab>
        </Tabs>
        <Snaps>
          <Snap $gap={0}><Fit w={27}>Int</Fit></Snap>
          {SNAPS.map(([t, w, g, s]) => (
            <Snap key={t} $gap={g}>
              <Box $off={s === "off"}>
                {s === "on" && <svg width="18" height="16" viewBox="0 0 18 16"><path d="M1 8 L6 14 L17 1" fill="none" stroke="#2a2c30" strokeWidth="2" /></svg>}
              </Box>
              <Fit w={w}>{t}</Fit>
            </Snap>
          ))}
        </Snaps>
      </Rhino>

      <Grasshopper>
        <Ribbon>
          {RIBBON.map((g, i) => (
            <Group key={i} $w={g.w}>
              <GroupIcons>
                {g.icons.map((ic, j) => <GroupCell key={j}><svg width="46" height="46" viewBox="-23 -23 46 46">{ic}</svg></GroupCell>)}
              </GroupIcons>
              <GroupBar>
                <span>{g.label && <Fit w={g.lw}>{g.label}</Fit>}</span>
                <svg width="14" height="14" viewBox="-7 -7 14 14"><path d="M0 -6 V6 M-5 0 H5 M-3 3 L0 6 L3 3" stroke="#a8a8a8" strokeWidth="1.800" fill="none" /></svg>
              </GroupBar>
            </Group>
          ))}
        </Ribbon>
        <CanvasBar>
          <svg width="38" height="42" viewBox="0 0 38 42">
            <path d="M5 22 V2 L15 0 L32 3 V22Z" fill="#f6f4f8" stroke="#555" strokeWidth="1.800" />
            <path d="M1 20 L14 19 L21 13 H36 V40 H1Z" fill="#7ccb50" stroke="#23611b" strokeWidth="2" />
            <path d="M3 38 L34 20 V38Z" fill="#6cc148" />
          </svg>
          <svg width="59" height="43" viewBox="-17 0 59 43">
            <path d="M0 1 H40 V41 H6 L0 36Z" fill="#1f63cf" stroke="#12264f" strokeWidth="2.200" />
            <rect x="7" y="2" width="26" height="18" fill="#e8eceb" /><path d="M11 8H30M11 12H30M11 16H30" stroke="#b9bfbe" strokeWidth="1.500" />
            <path d="M9 26 H30 V40 H9Z" fill="#e5e8ec" stroke="#173a80" strokeWidth="1.500" /><rect x="12" y="29" width="7" height="10" fill="#1d4fae" />
          </svg>
          <BarSep />
          <Zoom>
            <Fit w={42}>85%</Fit>
            <svg width="18" height="10" viewBox="0 0 18 10"><path d="M1 1 L9 8.500 L17 1" fill="none" stroke="#444" strokeWidth="1.800" /></svg>
          </Zoom>
          <BarRight>
            <svg width="38" height="42" viewBox="-19 -21 38 42">
              <path d="M-15 -4 C-14 -14 -8 -20 0 -20 Q14 -18 15 -6 L9 4 H-12Z" fill="#f1f1f1" stroke="#8d8d8d" strokeWidth="2" /><path d="M0 -18 Q0 -8 12 -5" fill="none" stroke="#8d8d8d" strokeWidth="1.800" />
              <path d="M-17 9 Q0 -8 17 9 Q0 20 -17 9Z" fill="#2d2d2d" /><path d="M-15 12 Q0 26 15 12" fill="none" stroke="#444" strokeWidth="2.400" />
            </svg>
            <svg width="50" height="44" viewBox="0 0 50 44">
              <path d="M1 22 L16 2 Q34 -3 42 14 L24 41 Q4 42 1 22Z" fill="#f6f6f6" stroke="#444" strokeWidth="2" />
              <ellipse cx="13" cy="29" rx="8" ry="12" transform="rotate(-35 13 29)" fill="#fff" stroke="#999" strokeWidth="2" />
              <ellipse cx="29" cy="13" rx="8" ry="12" transform="rotate(-35 29 13)" fill="#eee" stroke="#444" strokeWidth="2" />
              <ellipse cx="29" cy="13" rx="4" ry="8" transform="rotate(-35 29 13)" fill="#fff" stroke="#777" strokeWidth="1.500" />
            </svg>
          </BarRight>
        </CanvasBar>
        <Canvas>
          <Wires width="948" height="963" viewBox="1052 161 948 963">
            <g fill="none">
              <path d="M1050 442 C1062 442 1068 447 1080 447" stroke="#5f5b56" strokeWidth="7" /><path d="M1050 442 C1062 442 1068 447 1080 447" stroke="#bdb9b1" strokeWidth="2.400" />
              <path d="M1192 447 C1282 447 1232 602 1318 602" stroke="#5f5b56" strokeWidth="7" /><path d="M1192 447 C1282 447 1232 602 1318 602" stroke="#bdb9b1" strokeWidth="2.400" />
              <path d="M1050 684 C1142 630 1196 569 1318 569" stroke="#4b4744" strokeWidth="3.600" />
            </g>
            {port(1084, 447, "l")}{port(1187, 447, "r")}{port(1322, 568, "l")}{port(1322, 602, "l")}{port(1426, 585, "r")}{port(1266, 744, "l")}{port(1348, 744, "r")}
          </Wires>
          <Node $x={32} $y={256} $w={103} $h={62} $hue="violet">
            <Ports $w={28}><Fit w={10}>B</Fit></Ports>
            <Core><Turn><Fit w={36}>Cap</Fit></Turn></Core>
            <Ports $pr={12}><Fit w={10}>B</Fit></Ports>
          </Node>
          <Node $x={270} $y={388} $w={105} $h={75}>
            <Ports $w={28} $gap={8}><Fit w={11}>A</Fit><Fit w={10}>B</Fit></Ports>
            <Core><Turn><Fit w={49}>SDiff</Fit></Turn></Core>
            <Ports $pr={12}><Fit w={10}>R</Fit></Ports>
          </Node>
          <Node $x={213} $y={567} $w={84} $h={34} $r={7}>
            <Ports $pr={2}><Fit w={21}>Srf</Fit></Ports>
          </Node>
          <Caption><Fit w={409}>BOX MORPH TOOL :</Fit></Caption>
        </Canvas>
      </Grasshopper>

      <Menu>
        {ITEMS.map(([t, w, ic, active]) => (
          <Item key={t} $active={active}>
            <svg width="46" height="46" viewBox="-23 -23 46 46">{ic}</svg>
            <Label><Fit w={w}>{t}</Fit></Label>
          </Item>
        ))}
        <Query><Fit w={44}>mor</Fit></Query>
      </Menu>
      <RedFrame />
    </Page>
  );
}
